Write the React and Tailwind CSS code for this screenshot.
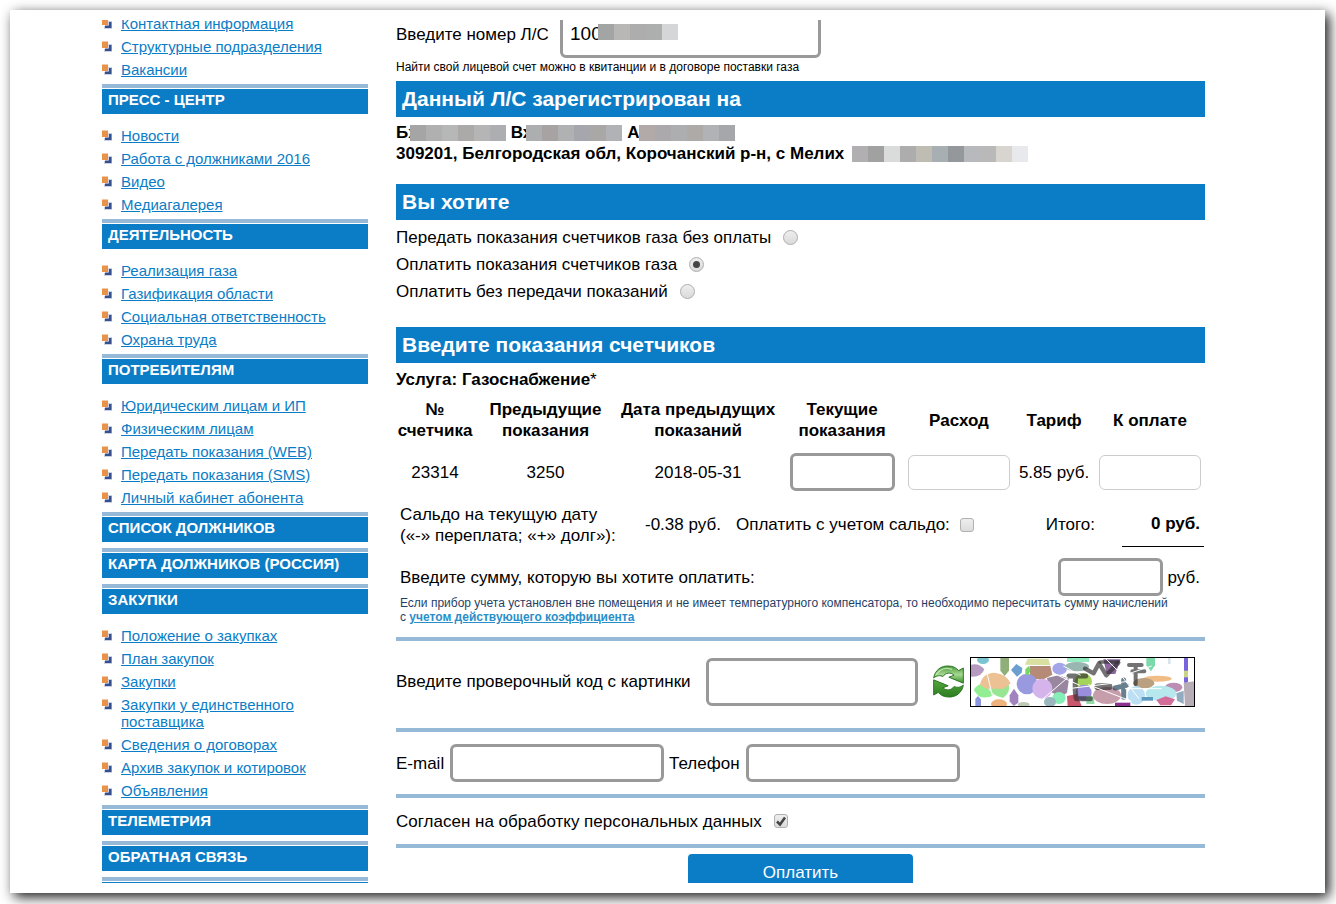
import React from "react";

const menu = [
  { links: ["Контактная информация", "Структурные подразделения", "Вакансии"] },
  { title: "Пресс - центр", links: ["Новости", "Работа с должниками 2016", "Видео", "Медиагалерея"] },
  {
    title: "Деятельность",
    links: ["Реализация газа", "Газификация области", "Социальная ответственность", "Охрана труда"],
  },
  {
    title: "Потребителям",
    links: [
      "Юридическим лицам и ИП",
      "Физическим лицам",
      "Передать показания (WEB)",
      "Передать показания (SMS)",
      "Личный кабинет абонента",
    ],
  },
  { title: "Список должников" },
  { title: "Карта должников (Россия)" },
  {
    title: "Закупки",
    links: [
      "Положение о закупках",
      "План закупок",
      "Закупки",
      "Закупки у единственного поставщика",
      "Сведения о договорах",
      "Архив закупок и котировок",
      "Объявления",
    ],
  },
  { title: "Телеметрия" },
  { title: "Обратная связь" },
  { title: "\u00a0" },
];

function Bullet() {
  return (
    <svg className="mt-[3px] h-[11px] w-[10px] shrink-0" viewBox="0 0 10 11" aria-hidden="true">
      <path d="M6 3h4v8H2V8h4z" fill="#cdd3e6" />
      <path d="M7 4h2.5v6H3V7.500h4z" fill="#35508c" />
      <rect x="0" y="0.500" width="6" height="6.500" fill="#e8924a" />
    </svg>
  );
}

function MenuGroup({ title, links }) {
  return (
    <section>
      {title && (
        <h2 className="border-t-4 border-[#95b9d7] pt-px text-[15px] leading-[22px] font-bold text-white uppercase">
          <a href="#" className="block bg-[#0b7dc6] pb-[3px] pl-1.5">{title}</a>
        </h2>
      )}
      {links ? (
        <ul className={title ? "pt-[13px]" : ""}>
          {links.map((l) => (
            <li key={l} className="mb-1.5 flex gap-[9px] text-[15px] leading-[17px]">
              <Bullet />
              <a href="#" className="max-w-[210px] text-[#0b7dc6] underline">{l}</a>
            </li>
          ))}
        </ul>
      ) : (
        <div className="h-1.5" />
      )}
    </section>
  );
}

function Mosaic({ colors, className }) {
  return (
    <span className={"inline-flex h-4 " + className} aria-hidden="true">
      {colors.map((c, i) => (
        <span key={i} className="h-4 w-4" style={{ background: c }} />
      ))}
    </span>
  );
}

function Band({ children }) {
  return (
    <h2 className="h-9 bg-[#0b7dc6] px-1.5 text-[21px] leading-9 font-bold text-white">{children}</h2>
  );
}

const field = "rounded-md border-[3px] border-[#999] bg-white px-[7px] outline-none";
const thinField = "h-[35px] w-[102px] rounded-md border border-[#ccc] bg-white px-1.5 align-middle outline-none";
const check =
  "h-3.5 w-3.5 shrink-0 appearance-none rounded-[3px] border border-[#b0b0b0] bg-linear-to-b from-[#eee] to-[#dcdcdc]";

function Radio({ id, label, on }) {
  return (
    <div className="flex h-[27px] items-center gap-3">
      <label htmlFor={id}>{label}</label>
      <span className="relative flex">
        <input
          type="radio"
          name="mode"
          id={id}
          defaultChecked={on}
          className="peer h-[15px] w-[15px] appearance-none rounded-full border border-[#adadad] bg-linear-to-b from-[#eee] to-[#dadada]"
        />
        <span className="pointer-events-none absolute top-1 left-1 hidden h-[7px] w-[7px] rounded-full bg-[#444] peer-checked:block" />
      </span>
    </div>
  );
}

const arrow = "M26 94C30 70 50 57 70 58c14 0 24 5 32 14l14-8v46L72 92l16-6C78 76 62 78 54 90c-8-4-18-4-28 4z";

function Refresh() {
  return (
    <svg width="31" height="33" viewBox="24 56 94 98" aria-hidden="true">
      <defs>
        <linearGradient id="leafTop" x1="0" y1="0" x2="0" y2="1">
          <stop offset="0" stopColor="#4a9a3c" />
          <stop offset="0.500" stopColor="#a5d890" />
          <stop offset="1" stopColor="#3c8f2c" />
        </linearGradient>
        <linearGradient id="leafBottom" x1="0" y1="0" x2="0" y2="1">
          <stop offset="0" stopColor="#2c7d20" />
          <stop offset="1" stopColor="#55a83e" />
        </linearGradient>
      </defs>
      <g stroke="#2c7522" strokeWidth="3" strokeLinejoin="round">
        <path fill="url(#leafTop)" d={arrow} />
        <path fill="url(#leafBottom)" d={arrow} transform="rotate(180 71 105)" />
      </g>
      <path d="M34 84C46 66 64 62 82 68" fill="none" stroke="#d0ecc2" strokeWidth="4" opacity="0.800" />
    </svg>
  );
}

function Captcha() {
  return (
    <svg width="225" height="50" viewBox="135 33 675 150" role="img" aria-label="Проверочный код">
      <rect x="135" y="33" width="675" height="150" fill="#fff" />
      <g>
        <ellipse cx="174" cy="42" rx="18" ry="12" fill="#7cc4d0" />
        <path d="M138 56q24-6 40 14q-8 24-40 22z" fill="#b79ac0" />
        <path d="M226 34h26v40l-13 16-13-16z" fill="#8fae78" />
        <path d="M258 72l16-18 18 12-2 14-14 12z" fill="#6a9fd0" />
        <path d="M146 132q14-24 36-14l24 30q-24 12-46 2z" fill="#93ee93" />
        <path d="M190 118h62q4 24-18 38-36-6-44-38z" fill="#98e694" />
        <path d="M165 116q6-34 44-36 36 4 48 32l-20 16h-54z" fill="#ecc193" />
        <ellipse cx="222" cy="174" rx="24" ry="14" fill="#efb27c" />
        <path d="M151 182v-24l8-8 9 10v22z" fill="#8c96dc" />
        <path d="M254 148l13-20 13 20v22l-14 10-12-14z" fill="#a183bd" />
        <path d="M300 56l8-18h62l6 20z" fill="#d9dfa0" />
        <path d="M314 60h62l6 26-26 14h-40z" fill="#b58b78" />
        <circle cx="306" cy="114" r="31" fill="#9999df" />
        <path d="M301 70l10-10 6 12-6 14h-10z" fill="#76d860" />
        <path d="M366 96l34-8 32 10-6 42-20 14-34-20z" fill="#99879f" />
        <circle cx="352" cy="128" r="30" fill="#d5b4ec" />
        <ellipse cx="404" cy="68" rx="22" ry="18" fill="#a3a5e8" />
        <ellipse cx="402" cy="156" rx="20" ry="18" fill="#84eeb6" />
        <ellipse cx="375" cy="168" rx="18" ry="15" fill="#99b7bd" />
        <ellipse cx="296" cy="176" rx="18" ry="8" fill="#bfc9b8" />
        <path d="M426 36h66v12h-66z" fill="#93edc0" />
        <ellipse cx="456" cy="62" rx="36" ry="14" fill="#9ab6b0" />
        <ellipse cx="475" cy="106" rx="26" ry="24" fill="#a5d45c" />
        <circle cx="476" cy="140" r="24" fill="#9a8ddc" />
        <path d="M426 150l30-6 14 36h-42z" fill="#c8566d" />
        <path d="M484 150h24v24h-24z" fill="#97dba8" />
        <ellipse cx="546" cy="148" rx="42" ry="26" fill="#c69daa" />
        <path d="M535 40h52l-16 44h-26z" fill="#8c689f" />
        <path d="M664 36h26v22l-12 18-14-18z" fill="#7cd9aa" />
        <ellipse cx="698" cy="98" rx="42" ry="9" fill="#f0bd87" />
        <ellipse cx="656" cy="112" rx="32" ry="16" fill="#b8a080" />
        <ellipse cx="746" cy="124" rx="26" ry="14" fill="#bb8db4" />
        <ellipse cx="708" cy="142" rx="46" ry="23" fill="#b6e8ee" />
        <ellipse cx="634" cy="148" rx="26" ry="28" fill="#bddff4" />
        <path d="M650 153h34v11h-34z" fill="#5b9ac0" />
        <path d="M694 162l28-11 28 9-12 18h-32z" fill="#d46c9a" />
        <path d="M754 142l22-8v40l-20-10z" fill="#91acc0" />
        <path d="M777 36h12v70l-6 10-6-8z" fill="#7864dc" />
        <path d="M777 74h12v20h-12z" fill="#ccd488" />
        <path d="M776 110l32-4v74h-28z" fill="#b7adb6" />
        <path d="M729 36h8v18h-8z" fill="#d8e5ef" />
        <path d="M570 170h46v12h-46z" fill="#8b338e" />
      </g>
      <g fill="none" stroke="#303030" strokeOpacity="0.680" strokeLinecap="round" strokeLinejoin="round">
        <path d="M432 90h50M452 92q-4 40 2 66h42" strokeWidth="15" />
        <path d="M480 68l26 14 16-30 22 36 36-38" strokeWidth="13" />
        <path d="M526 48h52" strokeWidth="11" />
        <path d="M518 122h34" strokeWidth="20" />
        <path d="M596 102v52M570 126l34-8" strokeWidth="15" stroke="#24445a" />
        <path d="M612 57h38M632 60v54M622 76h36" strokeWidth="12" />
      </g>
      <g fill="none" stroke="#fff" strokeWidth="3">
        <path d="M186 80l18 78M345 166l84-72M390 84l74 34M415 60l52 28M490 116l130 50M540 36l36 36 66 86M590 90l90-30M430 128l180-22M600 128h110" />
      </g>
      <rect x="136.500" y="34.500" width="672" height="147" fill="none" stroke="#000" strokeWidth="3" />
    </svg>
  );
}

export default function App() {
  return (
    <div className="h-screen bg-white pt-2.5 pr-[11px] pb-[11px] pl-2.5 font-['Liberation_Sans',Arial,sans-serif] text-[17px] leading-[21px] text-black">
      <div className="h-full bg-white p-2.5 shadow-[4px_4px_12px_rgba(0,0,0,0.9)]">
        <div className="flex h-full items-start gap-7 overflow-hidden pr-[110px] pl-[82px]">
          <nav className="-mt-[5px] w-[266px] shrink-0">
            {menu.map((g, i) => (
              <MenuGroup key={i} {...g} />
            ))}
          </nav>

          <form className="-mt-2.5 min-w-0 flex-1" onSubmit={(e) => e.preventDefault()}>
            <div className="flex items-center">
              <label htmlFor="account" className="w-[164px]">Введите номер Л/С</label>
              <div className="relative w-[261px]">
                <input id="account" defaultValue="100" className={field + " h-12 w-full text-[19px]"} />
                <Mosaic
                  className="absolute top-3.5 left-[38px]"
                  colors={["#a3a5a4", "#b9b7b6", "#adadad", "#adafae", "#d5d6d8"]}
                />
              </div>
            </div>
            <p className="mb-1.5 pt-px text-xs leading-4">
              Найти свой лицевой счет можно в квитанции и в договоре поставки газа
            </p>

            <Band>Данный Л/С зарегистрирован на</Band>
            <div className="pt-[5px] pb-5 font-bold">
              <div className="flex items-center gap-[5px] overflow-hidden">
                <span className="flex items-center">
                  Бх
                  <Mosaic className="-ml-2" colors={["#a5a5a6", "#b0b0b1", "#b6b8b8", "#abaaa8", "#b6b5b6", "#adaeb1"]} />
                </span>
                <span className="flex items-center">
                  Вх
                  <Mosaic className="-ml-1.5" colors={["#adaeb0", "#a7a3a2", "#b0b1b2", "#a6a7ae", "#aaa8a7", "#b0b2b6"]} />
                </span>
                <span className="flex items-center">
                  А
                  <Mosaic colors={["#b2aaa8", "#aba9ab", "#acaeb0", "#adaaa8", "#b1b2b5", "#a6a7ab"]} />
                </span>
              </div>
              <div className="flex items-center gap-2">
                309201, Белгородская обл, Корочанский р-н, с Мелих
                <Mosaic
                  className=""
                  colors={["#b1afb1", "#a1a1a1", "#dadcdb", "#adadae", "#bfbcb4", "#a8afb2", "#94989b", "#b8b9bc", "#b9b9b9", "#d8d5d0", "#e7e9ed"]}
                />
              </div>
            </div>

            <Band>Вы хотите</Band>
            <div className="pt-1 pb-[22px]">
              <Radio id="m1" label="Передать показания счетчиков газа без оплаты" />
              <Radio id="m2" label="Оплатить показания счетчиков газа" on />
              <Radio id="m3" label="Оплатить без передачи показаний" />
            </div>

            <Band>Введите показания счетчиков</Band>
            <p className="mt-1.5 font-bold">
              Услуга: Газоснабжение<span className="font-normal">*</span>
            </p>

            <table className="mt-2 w-full table-fixed text-center">
              <colgroup>
                <col className="w-[78px]" />
                <col className="w-[143px]" />
                <col className="w-[162px]" />
                <col className="w-[126px]" />
                <col className="w-[108px]" />
                <col className="w-[82px]" />
                <col className="w-[110px]" />
              </colgroup>
              <thead>
                <tr className="h-[44px]">
                  <th>№<br />счетчика</th>
                  <th>Предыдущие<br />показания</th>
                  <th className="whitespace-nowrap">Дата предыдущих<br />показаний</th>
                  <th>Текущие<br />показания</th>
                  <th>Расход</th>
                  <th>Тариф</th>
                  <th>К оплате</th>
                </tr>
              </thead>
              <tbody>
                <tr className="h-[60px]">
                  <td>23314</td>
                  <td>3250</td>
                  <td>2018-05-31</td>
                  <td><input aria-label="Текущие показания" className={field + " h-[38px] w-[105px] align-middle"} /></td>
                  <td><input aria-label="Расход" className={thinField} /></td>
                  <td className="whitespace-nowrap">5.85 руб.</td>
                  <td><input aria-label="К оплате" className={thinField} /></td>
                </tr>
              </tbody>
            </table>

            <div className="flex h-[45px] items-center pr-px pl-1">
              <p className="w-[245px]">
                Сальдо на текущую дату<br />(«-» переплата; «+» долг»):
              </p>
              <span className="w-[91px]">-0.38 руб.</span>
              <label htmlFor="saldo" className="mr-2.5">Оплатить с учетом сальдо:</label>
              <input id="saldo" type="checkbox" className={check} />
              <span className="ml-auto">Итого:</span>
              <strong className="ml-[27px] h-full w-[82px] border-b border-black pr-1 text-right leading-[44px]">0 руб.</strong>
            </div>

            <div className="mt-[11px] flex items-center gap-[5px] pr-[5px] pl-1">
              <label htmlFor="sum" className="mr-auto">Введите сумму, которую вы хотите оплатить:</label>
              <input id="sum" className={field + " h-[38px] w-[105px]"} />
              <span>руб.</span>
            </div>
            <p className="pl-1 text-xs leading-[14px] text-[#1f3f66]">
              Если прибор учета установлен вне помещения и не имеет температурного компенсатора, то необходимо пересчитать сумму начислений
              <br />с <a href="#" className="font-bold text-[#2a8fc8] underline">учетом действующего коэффициента</a>
            </p>

            <div className="mt-[13px] flex h-[91px] items-center border-t-4 border-[#95b9d7] pb-1.5">
              <label htmlFor="code" className="w-[310px]">Введите проверочный код с картинки</label>
              <input id="code" className={field + " h-12 w-[212px]"} />
              <button type="button" aria-label="Обновить картинку" className="mr-1.5 ml-[15px]"><Refresh /></button>
              <Captcha />
            </div>

            <div className="flex h-[70px] items-center border-y-4 border-[#95b9d7]">
              <label htmlFor="email" className="w-[54px]">E-mail</label>
              <input id="email" type="email" className={field + " mr-[5px] h-[38px] w-[214px]"} />
              <label htmlFor="phone" className="w-[77px]">Телефон</label>
              <input id="phone" type="tel" className={field + " h-[38px] w-[214px]"} />
            </div>

            <div className="flex h-[50px] items-center gap-3 border-b-4 border-[#95b9d7]">
              <label htmlFor="agree">Согласен на обработку персональных данных</label>
              <span className="relative flex">
                <input id="agree" type="checkbox" defaultChecked className={check + " peer"} />
                <svg className="pointer-events-none absolute inset-0 hidden peer-checked:block" width="14" height="14" viewBox="0 0 14 14" aria-hidden="true">
                  <path d="M3 7.500l3 3L11 3.500" fill="none" stroke="#444" strokeWidth="2.500" />
                </svg>
              </span>
            </div>

            <button type="submit" className="mx-auto mt-1.5 block h-9 w-[225px] rounded-sm bg-[#0b7dc6] text-white">
              Оплатить
            </button>
          </form>
        </div>
      </div>
    </div>
  );
}
